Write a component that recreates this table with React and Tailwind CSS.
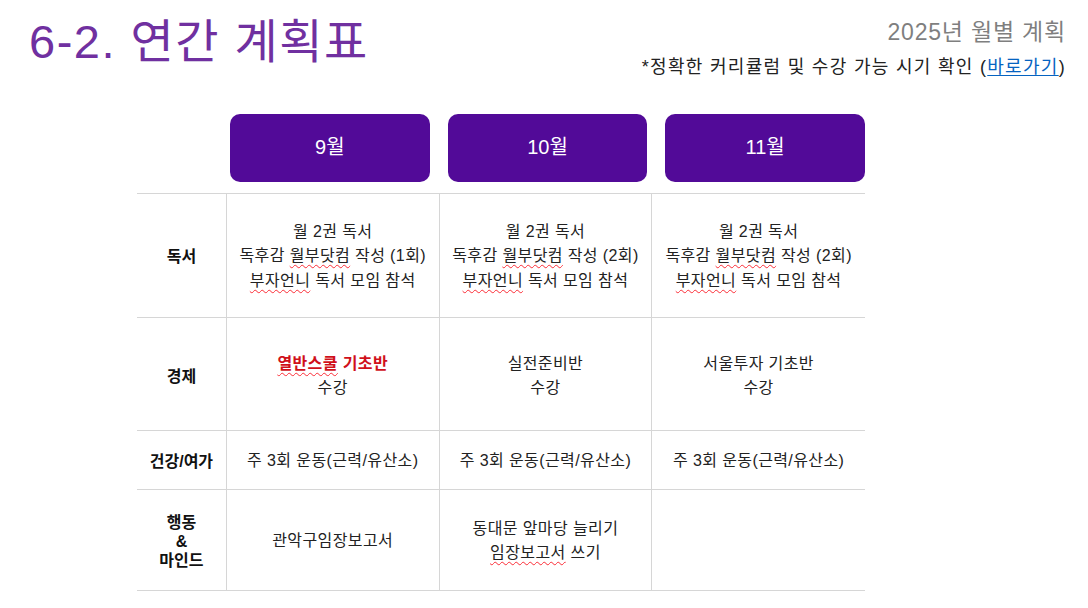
import React from "react";

const font = { fontFamily: '"Liberation Sans", "Noto Sans CJK KR", sans-serif' };

function Sp({ children }) {
  return (
    <span className="underline decoration-wavy decoration-red-500 decoration-1 underline-offset-[3px]">
      {children}
    </span>
  );
}

const rows = [
  {
    label: <>독서</>,
    h: "h-[124px]",
    cells: [
      <>월 2권 독서<br />독후감 <Sp>월부닷컴</Sp> 작성 (1회)<br /><Sp>부자언니</Sp> 독서 모임 참석</>,
      <>월 2권 독서<br />독후감 <Sp>월부닷컴</Sp> 작성 (2회)<br /><Sp>부자언니</Sp> 독서 모임 참석</>,
      <>월 2권 독서<br />독후감 <Sp>월부닷컴</Sp> 작성 (2회)<br /><Sp>부자언니</Sp> 독서 모임 참석</>,
    ],
    pad: "pt-[2px]",
  },
  {
    label: <>경제</>,
    h: "h-[113px]",
    cells: [
      <><span className="text-[#d0101a] font-bold"><Sp>열반스쿨</Sp> 기초반</span><br />수강</>,
      <>실전준비반<br />수강</>,
      <>서울투자 기초반<br />수강</>,
    ],
    pad: "pt-[4px]",
  },
  {
    label: <>건강/여가</>,
    h: "h-[59px]",
    cells: [
      <>주 3회 운동(근력/유산소)</>,
      <>주 3회 운동(근력/유산소)</>,
      <>주 3회 운동(근력/유산소)</>,
    ],
    pad: "pt-[2px]",
  },
  {
    label: <>행동<br />&amp;<br />마인드</>,
    h: "h-[101px]",
    cells: [
      <>관악구임장보고서</>,
      <>동대문 앞마당 늘리기<br /><Sp>임장보고서</Sp> 쓰기</>,
      <></>,
    ],
    pad: "pt-[2px]",
  },
];

export default function App() {
  return (
    <div className="w-[1088px] h-[608px] bg-white relative overflow-hidden text-[#222]" style={font}>
      <div className="flex justify-between">
        <div className="pl-[29px] pt-[12px] text-[47px] leading-[60px] text-[#7030a0] tracking-[1.5px]">
          6-2. 연간 계획표
        </div>
        <div className="pr-[22px] pt-[17px] flex flex-col items-end">
          <div className="text-[23px] leading-[30px] text-[#7f7f7f] tracking-[0.8px]">2025년 월별 계획</div>
          <div className="text-[18px] leading-[24px] mt-[8px] text-[#222] tracking-[1.3px]">
            *정확한 커리큘럼 및 수강 가능 시기 확인 (<span className="text-[#0563c1] underline underline-offset-2">바로가기</span>)
          </div>
        </div>
      </div>

      <div className="ml-[137px] w-[728px] mt-[35px]">
        <div className="flex pl-[93px] gap-[18px]">
          {["9월", "10월", "11월"].map((m) => (
            <div
              key={m}
              className="w-[200px] h-[68px] rounded-[10px] bg-[#520a98] text-white text-[20px] flex items-center justify-center pb-[3px]"
            >
              {m}
            </div>
          ))}
        </div>
        <div className="mt-[11px] border-t border-[#d6d6d6]">
          {rows.map((r, i) => (
            <div key={i} className={`flex border-b border-[#d6d6d6] ${r.h}`}>
              <div className={`w-[90px] border-r border-[#d6d6d6] flex items-center justify-center text-center text-[16px] leading-[19px] font-bold text-[#111] ${r.pad || ""}`}>
                <div>{r.label}</div>
              </div>
              {r.cells.map((c, j) => (
                <div
                  key={j}
                  className={`w-[213px] ${j < 2 ? "border-r border-[#d6d6d6]" : ""} flex items-center justify-center text-center text-[16px] leading-[24.5px] tracking-[0.4px] text-[#222] ${r.pad || ""}`}
                >
                  <div>{c}</div>
                </div>
              ))}
            </div>
          ))}
        </div>
      </div>
    </div>
  );
}
